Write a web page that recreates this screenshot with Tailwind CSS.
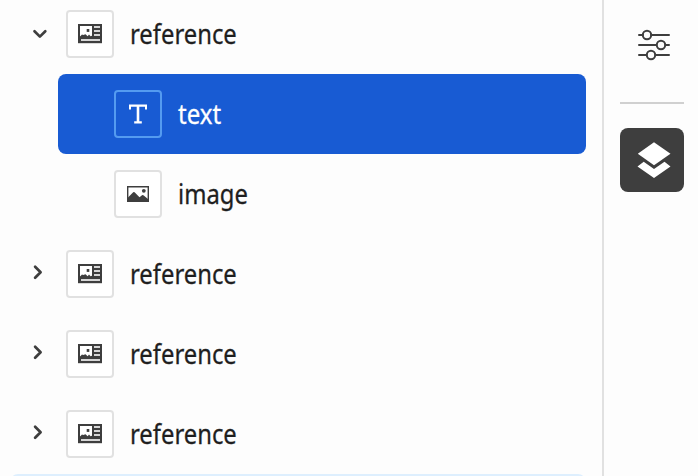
<!DOCTYPE html>
<html lang="en">
<head>
<meta charset="utf-8">
<title>Content tree</title>
<script src="https://cdn.jsdelivr.net/npm/@tailwindcss/browser@4"></script>
</head>
<body class="bg-[#fdfdfd]">
<svg class="hidden">
  <symbol id="reference" viewBox="0 0 24 20">
    <path fill="#3e3e3e" d="M0 0h24v19.200H0z"/>
    <path fill="#fff" d="M2 2h12v9.800l-1.500.500-1.500-1.800-1.300 1.700-2.200-2L5.200 11 4 10.400 2.300 12.300H2z"/>
    <path fill="#3e3e3e" d="M8.700 5h2.600v2.900H8.700z"/>
    <path fill="#d6d6d6" d="M16 2.100h6v2h-6zM16 6.100h6v2h-6zM16 10.100h6v2h-6zM3 15h19v2H3z"/>
  </symbol>
  <symbol id="chevron" viewBox="0 0 14 16">
    <path fill="none" stroke="#3e3e3e" stroke-width="2.700" stroke-linecap="round" stroke-linejoin="round" d="m4.100 2.700 5.500 5.500-5.500 5.500"/>
  </symbol>
</svg>
<div class="flex h-[476px] w-[698px] overflow-hidden font-['Noto_Sans',sans-serif] text-[27px] leading-[40px] text-[#1f1f1f] [-webkit-text-stroke:0.3px_currentColor]">
  <main class="w-[602px] shrink-0">
    <div class="-mt-[6px] flex h-20 items-center pl-[31px]">
      <svg class="w-[18px] h-[12px] shrink-0" viewBox="0 0 18 12"><path fill="none" stroke="#3e3e3e" stroke-width="2.700" stroke-linecap="round" stroke-linejoin="round" d="m3.500 3.300 5.400 5.300 5.400-5.300"/></svg>
      <div class="ml-[17px] flex size-12 items-center justify-center rounded-[4px] border-2 border-[#e1e1e1] bg-white"><svg class="h-5 w-6"><use href="#reference"/></svg></div>
      <span class="ml-4 origin-left scale-x-[.882]">reference</span>
    </div>
    <div class="ml-[58px] flex h-20 w-[528px] items-center rounded-[8px] bg-[#185bd3] pl-14 text-white">
      <div class="flex size-12 items-center justify-center rounded-[4px] border-2 border-[#549bf0]"><svg class="h-5 w-[18px]" viewBox="0 0 18 20"><path fill="#fff" d="M0 .500h18v5h-2V2.800h-5.700v14.400h2.500v2.300H5.200v-2.300h2.500V2.800H2v2.700H0z"/></svg></div>
      <span class="ml-4 origin-left scale-x-[.89]">text</span>
    </div>
    <div class="flex h-20 items-center pl-[114px]">
      <div class="flex size-12 items-center justify-center rounded-[4px] border-2 border-[#e1e1e1] bg-white"><svg class="h-4 w-[22px]" viewBox="0 0 22 16"><path fill="none" stroke="#3e3e3e" stroke-width="1.400" d="M.700.700h20.600v14.600H.700z"/><path fill="#3e3e3e" d="M1 11.500 6.200 6.300q.700-.600 1.400 0l4.900 5 2.500-2.100q.700-.500 1.400 0L21 13v2.500H1z"/><circle cx="16.800" cy="4.800" r="1.900" fill="#3e3e3e"/></svg></div>
      <span class="ml-4 origin-left scale-x-[.882]">image</span>
    </div>
    <div class="flex h-20 items-center pl-[31px]">
      <svg class="mr-[21px] mb-1 h-4 w-[14px] shrink-0"><use href="#chevron"/></svg>
      <div class="flex size-12 items-center justify-center rounded-[4px] border-2 border-[#e1e1e1] bg-white"><svg class="h-5 w-6"><use href="#reference"/></svg></div>
      <span class="ml-4 origin-left scale-x-[.882]">reference</span>
    </div>
    <div class="flex h-20 items-center pl-[31px]">
      <svg class="mr-[21px] mb-1 h-4 w-[14px] shrink-0"><use href="#chevron"/></svg>
      <div class="flex size-12 items-center justify-center rounded-[4px] border-2 border-[#e1e1e1] bg-white"><svg class="h-5 w-6"><use href="#reference"/></svg></div>
      <span class="ml-4 origin-left scale-x-[.882]">reference</span>
    </div>
    <div class="flex h-20 items-center pl-[31px]">
      <svg class="mr-[21px] mb-1 h-4 w-[14px] shrink-0"><use href="#chevron"/></svg>
      <div class="flex size-12 items-center justify-center rounded-[4px] border-2 border-[#e1e1e1] bg-white"><svg class="h-5 w-6"><use href="#reference"/></svg></div>
      <span class="ml-4 origin-left scale-x-[.882]">reference</span>
    </div>
    <div class="ml-[10px] h-20 w-[576px] rounded-[8px] bg-[#deeffe]"></div>
  </main>
  <aside class="flex w-24 shrink-0 flex-col border-l-2 border-[#e1e1e1] pl-4">
    <svg class="mt-7 ml-[17px] h-[34px] w-[34px]" viewBox="0 0 34 34" fill="none" stroke="#3e3e3e" stroke-width="2" stroke-linecap="round"><path d="M2 7h4M14 7h18M2 17h17M28.500 17h3.500M2 27h7.500M18.500 27H32"/><circle cx="10" cy="7" r="4.200"/><circle cx="24" cy="17" r="4.200"/><circle cx="14" cy="27" r="4.200"/></svg>
    <div class="mt-10 h-[2px] w-16 bg-[#d0d0d0]"></div>
    <div class="mt-6 flex size-16 items-center justify-center rounded-[8px] bg-[#3e3e3e] pl-1"><svg class="h-9 w-[34px]" viewBox="0 0 34 36" fill="#fff"><path d="M17 .300 33.500 11.800 17 23.300.800 11.800z"/><path d="M.500 24.400 6.700 19.800 17 27.100l10.500-7.300 6 4.600L17 36z"/></svg></div>
  </aside>
</div>
</body>
</html>
